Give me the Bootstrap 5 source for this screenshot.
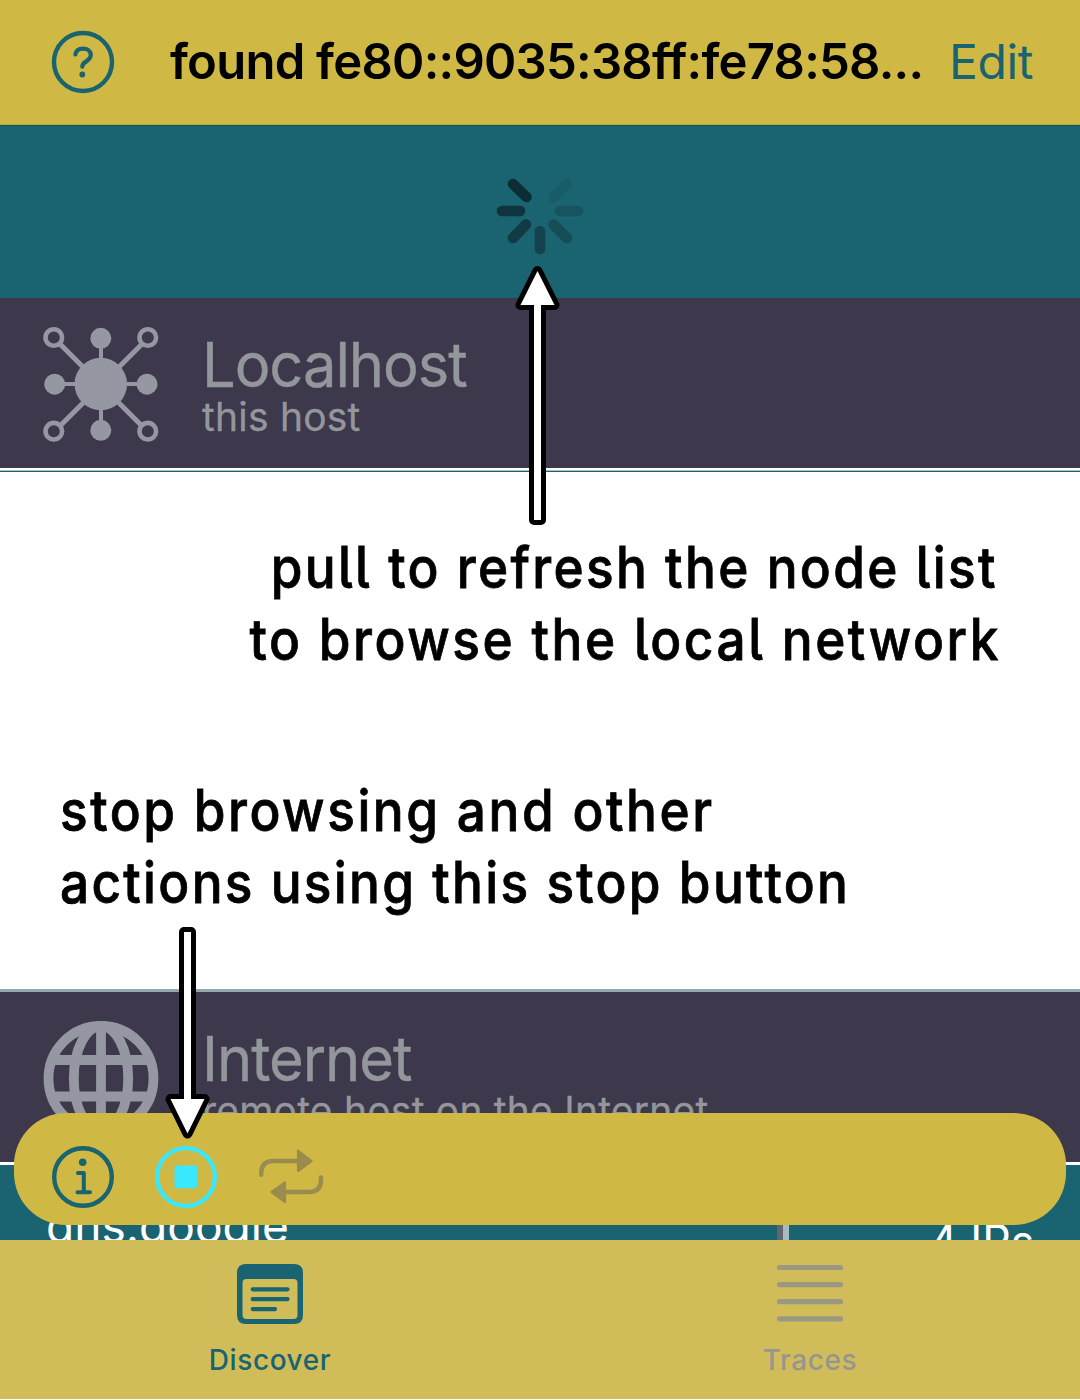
<!DOCTYPE html>
<html lang="en">
<head>
<meta charset="utf-8">
<meta name="viewport" content="width=device-width, initial-scale=1">
<title>Discover</title>
<link href="https://cdn.jsdelivr.net/npm/bootstrap@5.3.0/dist/css/bootstrap.min.css" rel="stylesheet">
<style>
  :root { --teal:#1a6370; --gold:#cfb944; --plum:#3d384b; --ash:#93979c; }
  body { font-family: Inter, "Liberation Sans", sans-serif; background:#fff; color:#000; overflow:hidden; }
  svg { display:block; }
  .screen { width:1080px; height:1399px; }
  .topbar { height:125px; background:var(--gold); padding:0 40px 0 51px; border-bottom:1px solid #b9a941; }
  .topbar-title { font-size:49px; line-height:60px; font-weight:600; margin-left:55px; width:754px; letter-spacing:-.75px; font-variant-ligatures:none; }
  .topbar-edit { font-size:48px; line-height:60px; color:var(--teal); margin-left:25px; text-decoration:none; letter-spacing:-.4px; }
  .pull { height:173px; background:var(--teal); padding-top:41px; border-top:1px solid #14505c; }
  .host { background:var(--plum); height:170px; padding:28px 0 0 42px; color:var(--ash); }
  .host-name { font-size:62px; line-height:49px; font-weight:400; margin:14px 0 5px; letter-spacing:-1.1px; transform:scaleX(.962); transform-origin:0 50%; -webkit-text-stroke:.4px var(--ash); }
  .host-note { font-size:39px; line-height:46px; letter-spacing:.22px; -webkit-text-stroke:.3px var(--ash); }
  .host-text { margin-left:42px; }
  .rule-a { height:4px; background:linear-gradient(#fff 0 2px,#a9c3c7 2px 3px,#1a6370 3px 4px); }
  .notes { height:517px; padding:60px 0 0; }
  .note { font-size:57px; line-height:72px; font-weight:500; font-feature-settings:"cv05" 1; white-space:nowrap; -webkit-text-stroke:.8px #000; }
  .note span { display:inline-block; transform:scaleX(.9); transform-origin:0 50%; }
  .note-top { margin-bottom:99px; padding-right:79px; }
  .note-top span { transform-origin:100% 50%; }
  .note-low { padding-left:60px; }
  .n1 { letter-spacing:2.600px; margin-right:3.500px; }
  .n2 { letter-spacing:2.850px; }
  .n3 { letter-spacing:2.840px; }
  .n4 { letter-spacing:2.560px; }
  .host-second { border-top:3px solid #93aaac; height:173px; }
  .node { background:var(--teal); border-top:3px solid #fff; height:120px; color:#fff; font-size:48px; line-height:60px; padding-left:46px; }
  .node-name { padding-top:31px; width:731px; }
  .node-name span, .node-ips span { display:inline-block; transform:scaleX(.96); transform-origin:0 50%; }
  .node-split { width:12px; background:linear-gradient(90deg,#5f6670 0 6px,#a9bbc0 6px 12px); }
  .node-ips { padding:47px 46px 0 0; }
  .node-ips span { transform:scaleX(.93); transform-origin:100% 50%; }
  .dock { left:14px; top:1113px; width:1052px; height:112px; border-radius:52px; background:var(--gold); padding:16px 37px 0; gap:39px; }
  .tabs { height:159px; background:#d0bd5a; font-size:28px; line-height:34px; font-weight:500; letter-spacing:.6px; }
  .tab-item { color:#969590; padding-top:23px; gap:18px; text-decoration:none; }
  .tab-on { color:var(--teal); }
  .pointer { pointer-events:none; z-index:5; }
  .pointer-up { left:514px; top:264px; }
  .pointer-down { left:164px; top:925px; }
</style>
<script src="https://cdn.jsdelivr.net/npm/bootstrap@5.3.0/dist/js/bootstrap.bundle.min.js"></script>
</head>
<body>
<div class="screen position-relative d-flex flex-column overflow-hidden">
  <header class="topbar d-flex align-items-center flex-shrink-0">
    <svg class="flex-shrink-0" width="64" height="64" viewBox="0 0 64 64" fill="none" stroke="#1a6370" stroke-linecap="round">
      <circle cx="32" cy="32" r="29" stroke-width="4.4"/>
      <path d="M24.4 24.5C25 20.6 28 18.6 32 18.6C36.600 18.600 39.800 21.300 39.800 25C39.800 28 38 29.700 35.300 31.400C32.400 33.200 31.300 34.700 31.300 36.700" stroke-width="4.2"/>
      <circle cx="31.300" cy="44.500" r="2.900" fill="#1a6370" stroke="none"/>
    </svg>
    <div class="topbar-title flex-shrink-0 text-nowrap">found fe80::9035:38ff:fe78:58...</div>
    <a class="topbar-edit" href="#">Edit</a>
  </header>

  <main class="d-flex flex-column flex-grow-1 overflow-hidden">
    <div class="pull d-flex justify-content-center flex-shrink-0">
      <svg width="88" height="88" viewBox="-44 -44 88 88" stroke-width="10.600" stroke-linecap="round">
        <path d="M13.500-13.500L27-27" stroke="#195c68"/>
        <path d="M20 0H37.800" stroke="#18545f"/>
        <path d="M13.500 13.500L27 27" stroke="#164c56"/>
        <path d="M0 20V38" stroke="#14434e"/>
        <path d="M-14 13.500L-27 27" stroke="#113a44"/>
        <path d="M-20 0H-38" stroke="#0f343d"/>
        <path d="M-13.500-14L-27-27" stroke="#0d2d34"/>
      </svg>
    </div>

    <section class="host d-flex flex-shrink-0">
      <svg class="flex-shrink-0" width="118" height="118" viewBox="42 326 118 118" fill="#9597a3" stroke="#9597a3">
        <path d="M101 338V431M55 384H147" stroke-width="4"/>
        <path d="M60 344L142 426M142 344L60 426" stroke-width="5"/>
        <circle cx="100.800" cy="384" r="26.300" stroke="none"/>
        <g stroke="none"><circle cx="100.800" cy="338.300" r="10.500"/><circle cx="100.800" cy="430.300" r="10.500"/><circle cx="54.700" cy="384.200" r="10.500"/><circle cx="147" cy="384.200" r="10.500"/></g>
        <g fill="#3d384b" stroke-width="4.600"><circle cx="53.800" cy="337.500" r="8.300"/><circle cx="147.800" cy="337.500" r="8.300"/><circle cx="53.800" cy="431.200" r="8.300"/><circle cx="147.800" cy="431.200" r="8.300"/></g>
      </svg>
      <div class="host-text text-nowrap">
        <h2 class="host-name">Localhost</h2>
        <div class="host-note">this host</div>
      </div>
    </section>
    <div class="rule-a flex-shrink-0"></div>

    <section class="notes flex-shrink-0">
      <div class="note note-top text-end">
        <span class="n1">pull to refresh the node list</span><br><span class="n2">to browse the local network</span>
      </div>
      <div class="note note-low">
        <span class="n3">stop browsing and other</span><br><span class="n4">actions using this stop button</span>
      </div>
    </section>

    <section class="host host-second d-flex flex-shrink-0">
      <svg class="flex-shrink-0" width="118" height="118" viewBox="42 1020 118 118" fill="none" stroke="#9597a3" stroke-width="9.800">
        <circle cx="101" cy="1078.500" r="52.500"/>
        <ellipse cx="101" cy="1078.500" rx="27.200" ry="52.500"/>
        <path d="M101 1026V1131M54 1060H148M54 1096.500H148"/>
      </svg>
      <div class="host-text text-nowrap">
        <h2 class="host-name">Internet</h2>
        <div class="host-note">remote host on the Internet</div>
      </div>
    </section>

    <section class="node d-flex flex-shrink-0">
      <div class="node-name"><span>dns.google</span></div>
      <div class="node-split"></div>
      <div class="node-ips ms-auto"><span>4 IPs</span></div>
    </section>
  </main>

  <nav class="tabs row g-0 flex-shrink-0">
    <a class="tab-item tab-on col-6 d-flex flex-column align-items-center" href="#">
      <svg width="66" height="62" viewBox="237 1263 66 62">
        <path fill="#1a6370" fill-rule="evenodd" d="M246 1264H294Q303 1264 303 1273V1315Q303 1324 294 1324H246Q237 1324 237 1315V1273Q237 1264 246 1264ZM246.500 1279Q242.500 1279 242.500 1283V1315Q242.500 1319 246.500 1319H293.500Q297.500 1319 297.500 1315V1283Q297.500 1279 293.500 1279Z"/>
        <path d="M252.700 1289.300H287.500M252.700 1299.200H287.500M252.700 1309.100H275" stroke="#1a6370" stroke-width="4.200" stroke-linecap="round"/>
      </svg>
      <span>Discover</span>
    </a>
    <a class="tab-item col-6 d-flex flex-column align-items-center" href="#">
      <svg width="68" height="62" viewBox="776 1263 68 62" stroke="#9a9882" stroke-width="5.200" stroke-linecap="round">
        <path d="M779.500 1267.500H840.500M779.500 1284.600H840.500M779.500 1301.700H840.500M779.500 1318.800H840.500"/>
      </svg>
      <span>Traces</span>
    </a>
  </nav>

  <div class="dock position-absolute d-flex align-items-center">
    <svg width="64" height="64" viewBox="51 1145 64 64" fill="none" stroke="#1a6370">
      <circle cx="83" cy="1177" r="28.800" stroke-width="4.400"/>
      <circle cx="82.700" cy="1162.200" r="3.800" fill="#1a6370" stroke="none"/>
      <path d="M78 1173H83.800V1192.200M77.500 1192.200H90" stroke-width="4" stroke-linecap="round" stroke-linejoin="round"/>
    </svg>
    <svg width="64" height="64" viewBox="154 1145 64 64">
      <circle cx="186" cy="1177" r="28.900" fill="none" stroke="#3ae8fe" stroke-width="4.400"/>
      <rect x="174.500" y="1165.500" width="22.800" height="22.700" rx="2" fill="#3ae8fe"/>
    </svg>
    <svg width="68" height="64" viewBox="257 1145 68 64" fill="none" stroke="#998c4c" stroke-width="4.400" stroke-linecap="round">
      <path d="M261.300 1174.800V1173Q261.300 1161 273.500 1161H298"/>
      <path d="M321 1177.500V1180Q321 1192 309 1192H285"/>
      <path d="M298 1150.500V1171L311.500 1161ZM285 1182.500V1202L271.500 1192Z" fill="#998c4c" stroke-width="2.200" stroke-linejoin="round"/>
    </svg>
  </div>

  <svg class="pointer pointer-up position-absolute" width="48" height="264" viewBox="514 264 48 264">
    <path d="M537.500 271L554.500 305H541V520H534V305H520.500Z" fill="#fff" stroke="#000" stroke-width="10" stroke-linejoin="round" paint-order="stroke"/>
  </svg>
  <svg class="pointer pointer-down position-absolute" width="48" height="216" viewBox="164 925 48 216">
    <path d="M187.500 1133.500L170.500 1099H184V932H191V1099H204.500Z" fill="#fff" stroke="#000" stroke-width="10" stroke-linejoin="round" paint-order="stroke"/>
  </svg>
</div>
</body>
</html>
